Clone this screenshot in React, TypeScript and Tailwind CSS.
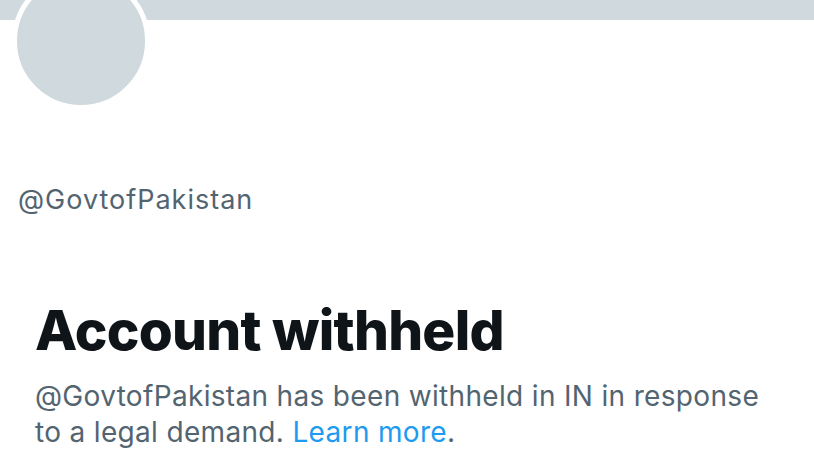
import React from "react";

export default function App() {
  return (
    <div className="w-[814px] h-[457px] overflow-hidden bg-white" style={{ fontFamily: "Inter, 'Noto Sans', sans-serif" }}>
      <div className="h-[20px] bg-[#cfd9de]" />
      <div className="relative z-10 -mt-[48px] ml-[12px] w-[138px] h-[138px] rounded-full bg-[#cfd9de] border-[5px] border-white" />
      <div className="ml-[18px] mt-[74px] text-[27px] leading-[32px] tracking-[1px] text-[#536471]">@GovtofPakistan</div>
      <div className="ml-[35px] mt-[84px] text-[55px] leading-[60px] font-extrabold tracking-[-0.75px] text-[#0f1419]">
        Account withheld
      </div>
      <p className="ml-[35px] mt-[18px] text-[28px] leading-[36px] tracking-[0.33px] text-[#536471]">
        @GovtofPakistan has been withheld in IN in response
        <br />
        to a legal demand. <span className="text-[#1d9bf0]">Learn more</span>.
      </p>
    </div>
  );
}
